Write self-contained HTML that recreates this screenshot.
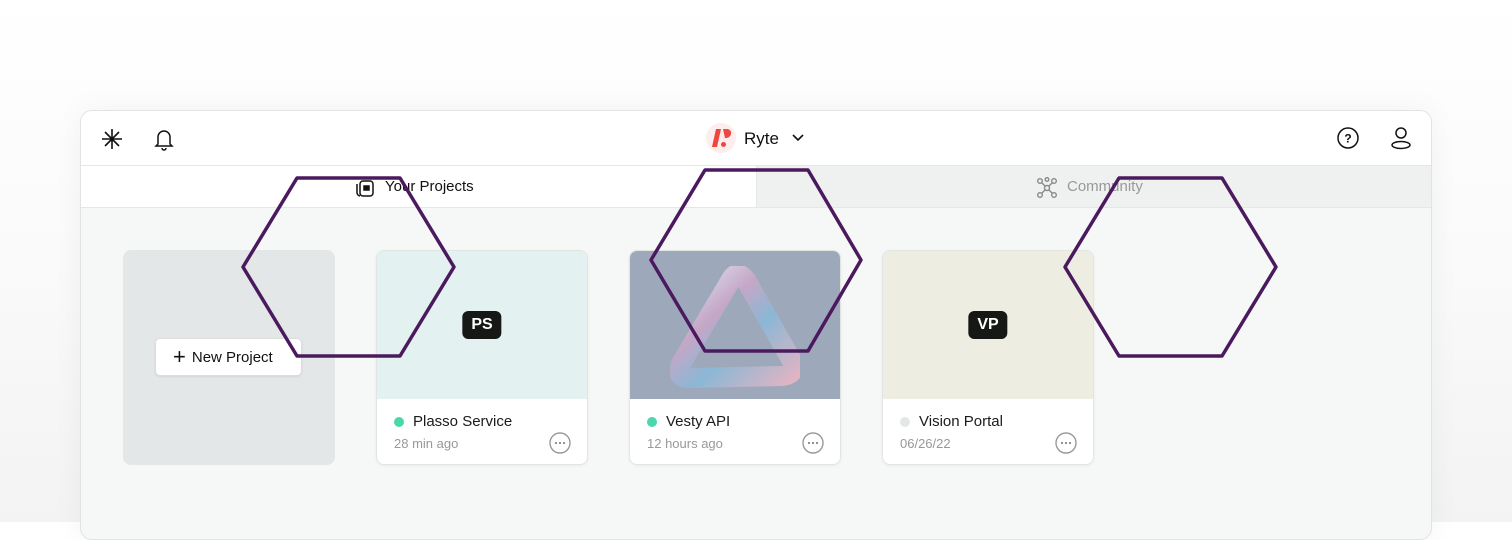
<!DOCTYPE html>
<html><head><meta charset="utf-8"><style>
*{box-sizing:border-box;margin:0;padding:0}
body{width:1512px;height:522px;overflow:hidden;background:linear-gradient(#fff,#fafafa 50%,#f3f3f3);font-family:"Liberation Sans",sans-serif;position:relative}
.win{position:absolute;left:80px;top:110px;width:1352px;height:430px;background:#f6f8f7;border:1px solid #e2e4e4;border-radius:12px;overflow:hidden;box-shadow:0 0 30px rgba(0,0,0,.05)}
.hdr{position:absolute;left:0;top:0;width:100%;height:55px;background:#fff;border-bottom:1px solid #e6e8e8}
.tabs{position:absolute;top:55px;left:0;width:100%;height:42px;border-bottom:1px solid #e6e8e8}
.t1{position:absolute;left:0;top:0;width:676px;height:41px;background:#fff;border-right:1px solid #e6e8e8}
.t2{position:absolute;left:676px;top:0;width:676px;height:41px;background:#eff1f0}
.lbl{position:absolute;font-size:15px}
.card{position:absolute;top:139px;width:212px;height:215px;border-radius:8px;border:1px solid #e3e5e5;background:#fff;overflow:hidden;box-shadow:0 1px 3px rgba(0,0,0,.05)}
.img{height:148px;position:relative}
.badge{position:absolute;left:50%;top:50%;transform:translate(-50%,-50%);background:#161816;color:#fff;font-weight:bold;font-size:16px;padding:5px 9px;border-radius:6px}
.name{position:absolute;left:36px;top:162px;font-size:15px;color:#1b1b1b}
.dot{position:absolute;left:17px;top:166px;width:10px;height:10px;border-radius:50%}
.time{position:absolute;left:17px;top:185px;font-size:13px;color:#999}
.more{position:absolute;right:16px;top:181px}
</style></head><body>
<div class="win">
 <div class="hdr">
  <svg style="position:absolute;left:20px;top:17px" width="22" height="22" viewBox="0 0 22 22" stroke="#111" stroke-width="1.6"><path d="M11 1v20M1 11h20M4 4l14 14M18 4L4 18"/></svg>
  <svg style="position:absolute;left:72px;top:16px" width="22" height="24" viewBox="0 0 22 24" fill="none" stroke="#111" stroke-width="1.5"><path d="M5 17V10a6 6 0 0112 0v7l2 2H3z M9 21a2 2 0 004 0"/></svg>
  <div style="position:absolute;left:625px;top:12px;width:30px;height:30px;border-radius:50%;background:#fbeeed"></div>
  <svg style="position:absolute;left:630px;top:17px" width="22" height="20" viewBox="0 0 22 20" fill="#f0463f"><path d="M5 1h5L6 19H1z"/><path d="M12 1h4a4 4 0 014 5 5 5 0 01-5 4l-1 0z"/><circle cx="12.5" cy="16.5" r="2.5"/></svg>
  <div class="lbl" style="left:663px;top:18px;font-size:17px;color:#111">Ryte</div>
  <svg style="position:absolute;left:710px;top:22px" width="14" height="10" viewBox="0 0 14 10" fill="none" stroke="#111" stroke-width="1.6"><path d="M2 2l5 5 5-5"/></svg>
  <svg style="position:absolute;left:1256px;top:16px" width="22" height="22" viewBox="0 0 22 22" fill="none" stroke="#111" stroke-width="1.5"><circle cx="11" cy="11" r="10"/><text x="11" y="15.5" font-size="12" text-anchor="middle" fill="#111" stroke="none" font-family="Liberation Sans" font-weight="bold">?</text></svg>
  <svg style="position:absolute;left:1309px;top:15px" width="22" height="24" viewBox="0 0 22 24" fill="none" stroke="#111" stroke-width="1.5"><circle cx="11" cy="7" r="5"/><ellipse cx="11" cy="19" rx="9" ry="3.5"/></svg>
 </div>
 <div class="tabs">
  <div class="t1">
   <svg style="position:absolute;left:274px;top:12px" width="20" height="20" viewBox="0 0 20 20" fill="none" stroke="#111" stroke-width="1.5"><rect x="5" y="3" width="13" height="15" rx="3"/><path d="M2 6v9a4 4 0 003 3"/><rect x="9" y="8" width="5" height="4" fill="#111"/></svg>
   <div class="lbl" style="left:304px;top:12px;color:#111">Your Projects</div>
  </div>
  <div class="t2">
   <svg style="position:absolute;left:279px;top:11px" width="22" height="22" viewBox="0 0 22 22" fill="none" stroke="#888" stroke-width="1.4"><circle cx="11" cy="11" r="2.5"/><circle cx="4" cy="4" r="2.3"/><circle cx="18" cy="4" r="2.3"/><circle cx="4" cy="18" r="2.3"/><circle cx="18" cy="18" r="2.3"/><circle cx="11" cy="2.5" r="1.8"/><path d="M6 6l3 3M16 6l-3 3M6 16l3-3M16 16l-3-3"/></svg>
   <div class="lbl" style="left:310px;top:12px;color:#999">Community</div>
  </div>
 </div>
 <div style="position:absolute;left:42px;top:139px;width:212px;height:215px;border-radius:8px;background:#e4e7e8">
  <div style="position:absolute;left:32px;top:88px;width:147px;height:38px;background:#fff;border:1px solid #ddd;border-radius:5px;font-size:15px;color:#111;line-height:36px;padding-left:17px;box-shadow:0 1px 2px rgba(0,0,0,.08)"><span style="font-size:22px;vertical-align:-2px;margin-right:6px">+</span>New Project</div>
 </div>
 <div class="card" style="left:295px"><div class="img" style="background:#e4f1f1"><div class="badge">PS</div></div><div class="dot" style="background:#4bd7ab"></div><div class="name">Plasso Service</div><div class="time">28 min ago</div><svg class="more" width="22" height="22" viewBox="0 0 22 22"><circle cx="11" cy="11" r="10" fill="none" stroke="#999" stroke-width="1.4"/><circle cx="7" cy="11" r="1.1" fill="#888"/><circle cx="11" cy="11" r="1.1" fill="#888"/><circle cx="15" cy="11" r="1.1" fill="#888"/></svg></div>
 <div class="card" style="left:548px"><div class="img" style="background:#9da9bb">
  <svg style="position:absolute;left:40px;top:15px" width="130" height="125" viewBox="0 0 130 125"><defs><linearGradient id="g" x1="0" y1="0" x2="1" y2="1"><stop offset="0" stop-color="#e8eef5"/><stop offset=".35" stop-color="#c9a6c8"/><stop offset=".6" stop-color="#88b9d8"/><stop offset="1" stop-color="#e6b5c4"/></linearGradient></defs><path d="M62 12Q68 4 76 14L122 95Q128 108 112 110L20 112Q4 112 12 96Z" fill="none" stroke="url(#g)" stroke-width="20" stroke-linejoin="round" opacity=".9"/></svg>
 </div><div class="dot" style="background:#4bd7ab"></div><div class="name">Vesty API</div><div class="time">12 hours ago</div><svg class="more" width="22" height="22" viewBox="0 0 22 22"><circle cx="11" cy="11" r="10" fill="none" stroke="#999" stroke-width="1.4"/><circle cx="7" cy="11" r="1.1" fill="#888"/><circle cx="11" cy="11" r="1.1" fill="#888"/><circle cx="15" cy="11" r="1.1" fill="#888"/></svg></div>
 <div class="card" style="left:801px"><div class="img" style="background:#eeede2"><div class="badge">VP</div></div><div class="dot" style="background:#e4e7e8"></div><div class="name">Vision Portal</div><div class="time">06/26/22</div><svg class="more" width="22" height="22" viewBox="0 0 22 22"><circle cx="11" cy="11" r="10" fill="none" stroke="#999" stroke-width="1.4"/><circle cx="7" cy="11" r="1.1" fill="#888"/><circle cx="11" cy="11" r="1.1" fill="#888"/><circle cx="15" cy="11" r="1.1" fill="#888"/></svg></div>
</div>
<svg style="position:absolute;left:0;top:0" width="1512" height="522" fill="none" stroke="#4b1a5e" stroke-width="3.5" stroke-linejoin="round">
 <polygon points="243,267 297,178 400,178 454,267 400,356 297,356"/>
 <polygon points="651,260 705,170 808,170 861,260 808,351 705,351"/>
 <polygon points="1065,267 1119,178 1222,178 1276,267 1222,356 1119,356"/>
</svg>
</body></html>
